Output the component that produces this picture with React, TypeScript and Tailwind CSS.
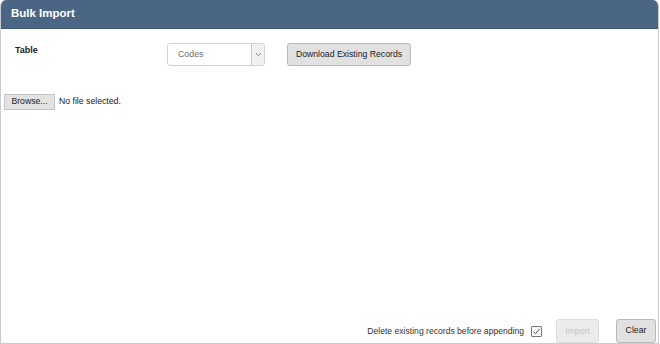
import React from "react";

export default function App() {
  return (
    <div className="w-[660px] h-[344px] bg-white" style={{ fontFamily: '"Liberation Sans", Arial, sans-serif' }}>
      <div className="w-[659px] h-[344px] flex flex-col border-r border-b border-l border-[#c9ccd0] rounded-t-[6px] overflow-hidden">
        <div className="h-[29px] bg-[#4b6685] flex items-center pl-[10px] border-b border-[#3f5873]">
          <span className="text-white font-bold text-[11.5px]">Bulk Import</span>
        </div>
        <div className="flex-1 flex flex-col">
          <div className="flex items-start pt-[14px]">
            <div className="w-[166px] pl-[14px] pt-[1px] text-[9px] font-bold text-[#222]">Table</div>
            <div className="flex h-[23px] w-[98px] border border-[#d2d2d2] rounded-[3px] bg-white">
              <div className="flex-1 flex items-center pl-[10px] text-[8.8px] text-[#6b6b6b]">Codes</div>
              <div className="w-[13px] border-l border-[#c8c8c8] bg-[#f1f1f1] flex items-center justify-center rounded-r-[3px]">
                <svg width="7" height="5" viewBox="0 0 7 5">
                  <path d="M1 1.2 L3.5 3.6 L6 1.2" fill="none" stroke="#777" strokeWidth="0.9" />
                </svg>
              </div>
            </div>
            <button className="ml-[22px] h-[23px] w-[124px] bg-[#e1e1e1] border border-[#b9b9b9] rounded-[3px] text-[8.7px] text-[#222] flex items-center justify-center whitespace-nowrap">
              Download Existing Records
            </button>
          </div>
          <div className="flex items-center mt-[28px] pl-[3px]">
            <button className="h-[16px] w-[51px] bg-[#e2e2e2] border border-[#c4c4c4] text-[8.7px] text-[#222] flex items-center justify-center">
              Browse...
            </button>
            <span className="ml-[4px] text-[8.7px] text-[#222]">No file selected.</span>
          </div>
          <div className="flex-1" />
          <div className="flex items-center justify-end pr-[2px]">
            <span className="text-[8.6px] text-[#333]">Delete existing records before appending</span>
            <span className="ml-[7px] w-[11px] h-[11px] border border-[#777] bg-white flex items-center justify-center rounded-[1px]">
              <svg width="9" height="9" viewBox="0 0 9 9">
                <path d="M1.5 4.6 L3.6 6.6 L7.6 1.8" fill="none" stroke="#444" strokeWidth="1" />
              </svg>
            </span>
            <button className="ml-[14px] h-[24px] w-[43px] bg-[#ececec] border border-[#dcdcdc] rounded-[3px] text-[8.6px] text-[#c4c4c4] flex items-center justify-center">
              Import
            </button>
            <button className="ml-[17px] h-[24px] w-[40px] bg-[#e1e1e1] border border-[#b9b9b9] rounded-[3px] text-[8.7px] text-[#222] flex items-center justify-center">
              Clear
            </button>
          </div>
        </div>
      </div>
    </div>
  );
}
